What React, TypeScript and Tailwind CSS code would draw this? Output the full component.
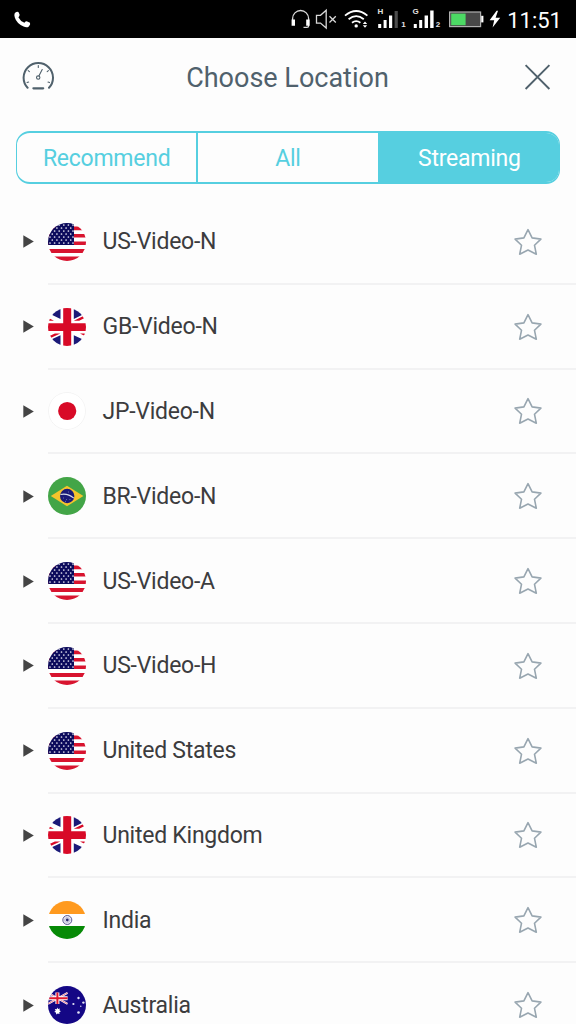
"use client";

import { useState, type ReactNode } from "react";

type Country = "us" | "gb" | "jp" | "br" | "in" | "au";

interface Location {
  id: string;
  name: string;
  country: Country;
}

const TABS = ["Recommend", "All", "Streaming"];

const LOCATIONS: Location[] = [
  { id: "us-n", name: "US-Video-N", country: "us" },
  { id: "gb-n", name: "GB-Video-N", country: "gb" },
  { id: "jp-n", name: "JP-Video-N", country: "jp" },
  { id: "br-n", name: "BR-Video-N", country: "br" },
  { id: "us-a", name: "US-Video-A", country: "us" },
  { id: "us-h", name: "US-Video-H", country: "us" },
  { id: "us", name: "United States", country: "us" },
  { id: "gb", name: "United Kingdom", country: "gb" },
  { id: "in", name: "India", country: "in" },
  { id: "au", name: "Australia", country: "au" },
];

const US_STARS = Array.from({ length: 7 }, (_, row) =>
  Array.from({ length: 6 }, (_, col) => ({
    x: 2 + col * 4.6 + (row % 2 ? 2.3 : 0),
    y: 2 + row * 3,
  })).filter((s) => s.x < 25.4)
).flat();

const FLAGS: Record<Country, ReactNode> = {
  us: (
    <>
      <rect width="38" height="38" fill="#fff" />
      <path d="M0 3.6h38v3.6H0zM0 11h38v3.6H0zM0 18.4h38v3.6H0zM0 26h38v3.9H0zM0 33.6h38v4.4H0z" fill="#d8142f" />
      <rect width="26" height="22" fill="#0c0b5c" />
      {US_STARS.map((s) => (
        <circle key={`${s.x}-${s.y}`} cx={s.x} cy={s.y} r="0.85" fill="#e6e6f2" />
      ))}
    </>
  ),
  gb: (
    <>
      <rect width="38" height="38" fill="#fff" />
      <path d="M12.5 0v11L3.2 6.6V0zM25.8 0v11l9.2-4.4V0zM12.5 38V27.2l-9.3 4.4V38zM25.8 38V27.2l9.2 4.4V38z" fill="#1b1a78" />
      <path d="M25.8 12.8l9.6-4.7 1.2 2-5.4 2.7zM12.3 25.4l-9.6 4.7-1.2-2 5.4-2.7zM0 9.8l6 3H1.5L0 12zM38 28.4l-6-3h4.5l1.5.8z" fill="#d80a27" />
      <path d="M15.2 0h8v15.2H38V23H23.2v15h-8V23H0v-7.8h15.2z" fill="#d80a27" />
    </>
  ),
  jp: (
    <>
      <circle cx="19" cy="19" r="18.6" fill="#fff" stroke="#f0f0f0" strokeWidth="0.8" />
      <circle cx="19.2" cy="19" r="9.1" fill="#d80a27" />
    </>
  ),
  br: (
    <>
      <rect width="38" height="38" fill="#43a547" />
      <path d="M2.8 19L19 8.8 35.4 19 19 29.3z" fill="#f5c42c" />
      <circle cx="19.2" cy="19" r="7.2" fill="#1b1a78" />
      <path d="M12.5 17.5q7-1.6 13.3 3.6" stroke="#d7dcea" strokeWidth="1.1" fill="none" />
      <path d="M15 21h.9M18 22.6h.9M21.5 22.5h.9M20 15h.9M17 24.4h.9" stroke="#8a91bd" strokeWidth="0.8" />
    </>
  ),
  in: (
    <>
      <rect width="38" height="38" fill="#fff" />
      <rect width="38" height="13" fill="#ff9a1f" />
      <rect y="25" width="38" height="13" fill="#078a07" />
      <circle cx="19.3" cy="19" r="4.5" fill="#e9e9f3" stroke="#4b4b88" strokeWidth="0.9" />
      <circle cx="19.3" cy="19" r="2.5" fill="none" stroke="#9a9ac4" strokeWidth="1" strokeDasharray="0.7 0.6" />
      <circle cx="19.3" cy="19" r="1.4" fill="#28286f" />
    </>
  ),
  au: (
    <>
      <rect width="38" height="38" fill="#140785" />
      <path d="M0 6.8l19.5 11M0 17.8l19.5-11" stroke="#fff" strokeWidth="1.9" />
      <path d="M0 6.8l19.5 11M0 17.8l19.5-11" stroke="#e4485f" strokeWidth="0.7" />
      <path d="M9.4 6.6v11.4M0 12.3h19.6" stroke="#fff" strokeWidth="4" />
      <path d="M9.4 6.6v11.4M0 12.3h19.6" stroke="#e0162f" strokeWidth="2" />
      <path d="M9.2 21.4l.9 1.6 1.9-.5-.6 1.8 1.5 1-1.6.9.2 1.9-1.7-.7-1.6 1-.2-1.8-1.8-.7 1.5-1.2-.9-1.7 1.9.2z" fill="#fff" />
      <g fill="#e4e4f6">
        <circle cx="30.5" cy="12" r="1.2" />
        <circle cx="25.4" cy="18" r="1.1" />
        <circle cx="35.4" cy="16.6" r="1.2" />
        <circle cx="32.8" cy="20.2" r="0.7" />
        <circle cx="30.5" cy="26.5" r="1.3" />
      </g>
    </>
  ),
};

function Flag({ country }: { country: Country }) {
  return (
    <svg className="h-[38px] w-[38px] shrink-0 rounded-full" viewBox="0 0 38 38">
      {FLAGS[country]}
    </svg>
  );
}

function StatusBar() {
  return (
    <div className="flex h-[38px] shrink-0 items-center justify-between bg-black px-[14px] text-white">
      <svg className="mt-[2px] h-[18px] w-[18px]" viewBox="0 0 18 18" fill="#fff">
        <path d="M.6 2.6Q2 0 4.4 1l1.2 2.4Q5.8 5 4.4 6.2q1.8 3.8 6 5.6 1.4-1.8 2.8-1.4l2.8 1.4q.8 1.6-1.2 3.6-1.8 1.6-5.2.2Q2.6 12.6.8 6.6 0 4 .6 2.6z" />
      </svg>

      <div className="flex items-center">
        {/* Headset, muted speaker, wifi, both signals and battery */}
        <svg className="h-[38px] w-[216px] shrink-0" viewBox="286 0 216 38">
          <g fill="none" stroke="#d8d8d8" strokeWidth="1.3">
            <path d="M292.6 20v-1.5a8 8 0 0 1 16 0V26q0 1.3-1.6 1.3h-3.5" />
            <path d="M316.5 15.3h4l5.7-5v17.8l-5.7-5h-4z" />
            <path d="M329.5 16.2l6.3 6.3M335.8 16.2l-6.3 6.3" />
          </g>
          <path d="M291.6 19.5h3.4v6.2h-3.4zM306.2 19.5h3.4v6.2h-3.4z" fill="#fff" />
          <g fill="none" stroke="#fff" strokeWidth="1.8">
            <path d="M345 15.6q11.2-9.3 22.4 0" />
            <path d="M348.6 19.3q7.6-6.4 15.2 0" />
            <path d="M352 22.8q4.2-3.4 8.4 0" />
          </g>
          <circle cx="356.2" cy="25.9" r="1.7" fill="#fff" />
          <path d="M362.8 24l2.2-2.6 2.2 2.6zM362.8 25.2l2.2 2.6 2.2-2.6z" fill="#fff" />
          <path d="M378.2 24h3v4h-3zM383.6 20h3v8h-3zM389 15.6h3.2V28H389z" fill="#fff" />
          <path d="M394.6 11h3.2v17h-3.2z" fill="#4c4c4c" />
          <path d="M413.8 24h3v4h-3zM419.2 20h3v8h-3zM424.6 15.6h3.4V28h-3.4zM430.2 10.6h3.4V28h-3.4z" fill="#fff" />
          <g fill="#e2e2e2" fontFamily="Liberation Sans, sans-serif" fontWeight="bold" fontSize="8">
            <text x="377.4" y="13.8">H</text>
            <text x="412.6" y="13.8">G</text>
            <text x="401.2" y="27.2">1</text>
            <text x="435.8" y="27.2">2</text>
          </g>
          <rect x="449.6" y="12" width="31" height="14.6" fill="#484848" stroke="#b0b0b0" strokeWidth="1.2" />
          <rect x="451.2" y="13.6" width="14.4" height="11.6" fill="#4cd964" />
          <path d="M481.2 15.8h2.2v6.6h-2.2z" fill="#fff" />
          <path d="M496.6 10.8l-7 9.4h4.6l-1.6 7.2 7.6-9.6h-4.6l2.4-7z" fill="#fff" />
        </svg>
        <span className="ml-[5px] mt-[3px] text-[22px] leading-none">11:51</span>
      </div>
    </div>
  );
}

function Header() {
  return (
    <div className="flex h-[80px] shrink-0 items-center justify-between pl-[22px] pr-[25px]">
      <button aria-label="Speed test">
        <svg className="block h-8 w-8" viewBox="0 0 32 32" fill="none" stroke="#50616c" strokeLinecap="round">
          <path d="M5.6 25.8a14.7 14.7 0 1 1 21.4 0" strokeWidth="2" />
          <path d="M11.4 26.3h9.8" strokeWidth="2.2" />
          <path d="M16.3 3.6v1.9M6.2 8.7l1.2 1M26.4 8.7l-1.2 1M5.1 20.6l1.5-.5M27.5 20.6l-1.5-.5M17 13.8l3.2-6.2" strokeWidth="1.1" />
          <circle cx="16.2" cy="15.6" r="1.7" strokeWidth="1.1" />
        </svg>
      </button>
      <h1 className="mr-[2px] text-[27px] leading-none text-[#50616c]">Choose Location</h1>
      <button aria-label="Close" className="mb-[2px]">
        <svg className="block h-[28px] w-[28px]" viewBox="0 0 28 28" fill="none" stroke="#50616c" strokeWidth="1.9">
          <path d="M2.6 2.2l23.8 23.8M26.4 2.2L2.6 26" />
        </svg>
      </button>
    </div>
  );
}

function LocationRow({ location }: { location: Location }) {
  const [favorite, setFavorite] = useState(false);

  return (
    <li className="flex h-[84.8px] shrink-0 items-stretch pl-[23px]">
      <div className="flex w-[25px] items-center pb-px">
        <svg className="h-[13px] w-[11px]" viewBox="0 0 11 13">
          <path d="M.3.3v12.4L10.8 6.5z" fill="#444" />
        </svg>
      </div>
      <div className="flex flex-1 items-center border-b-2 border-[#f2f2f3] pr-[34px] pt-px">
        <Flag country={location.country} />
        <span className="ml-[16.5px] flex-1 text-[23px] leading-none tracking-[-0.25px] text-[#3c3c3e]">{location.name}</span>
        <button aria-label={`Favorite ${location.name}`} onClick={() => setFavorite(!favorite)}>
          <svg
            className="block h-7 w-7"
            viewBox="0 0 28 28"
            fill={favorite ? "#56cfe0" : "none"}
            stroke="#98a6b0"
            strokeWidth="1.6"
            strokeLinejoin="round"
          >
            <path d="M14 1.6l4.1 8.3 8.8 1.2-6.4 6.2 1.8 8.9-8.3-4.2-8.3 4.2 1.8-8.9-6.4-6.2 8.8-1.2z" />
          </svg>
        </button>
      </div>
    </li>
  );
}

export default function App() {
  const [activeTab, setActiveTab] = useState("Streaming");

  return (
    <div className="flex h-screen w-full flex-col overflow-hidden bg-[#fdfdfd] font-[Roboto,sans-serif]">
      <StatusBar />
      <Header />

      {/* Tabs */}
      <div className="mx-4 mt-[13px] flex h-[53px] shrink-0 overflow-hidden rounded-[14px] border-x border-y-2 border-[#56cfe0]">
        {TABS.map((tab) => (
          <button
            key={tab}
            onClick={() => setActiveTab(tab)}
            className={`flex-1 border-l-2 border-[#56cfe0] pt-[2px] text-[23px] leading-none tracking-[-0.25px] first:border-l-0 ${
              activeTab === tab ? "bg-[#56cfe0] text-white" : "text-[#56cfe0]"
            }`}
          >
            {tab}
          </button>
        ))}
      </div>

      <ul className="mt-4 flex shrink-0 flex-col">
        {LOCATIONS.map((location) => (
          <LocationRow key={location.id} location={location} />
        ))}
      </ul>
    </div>
  );
}
